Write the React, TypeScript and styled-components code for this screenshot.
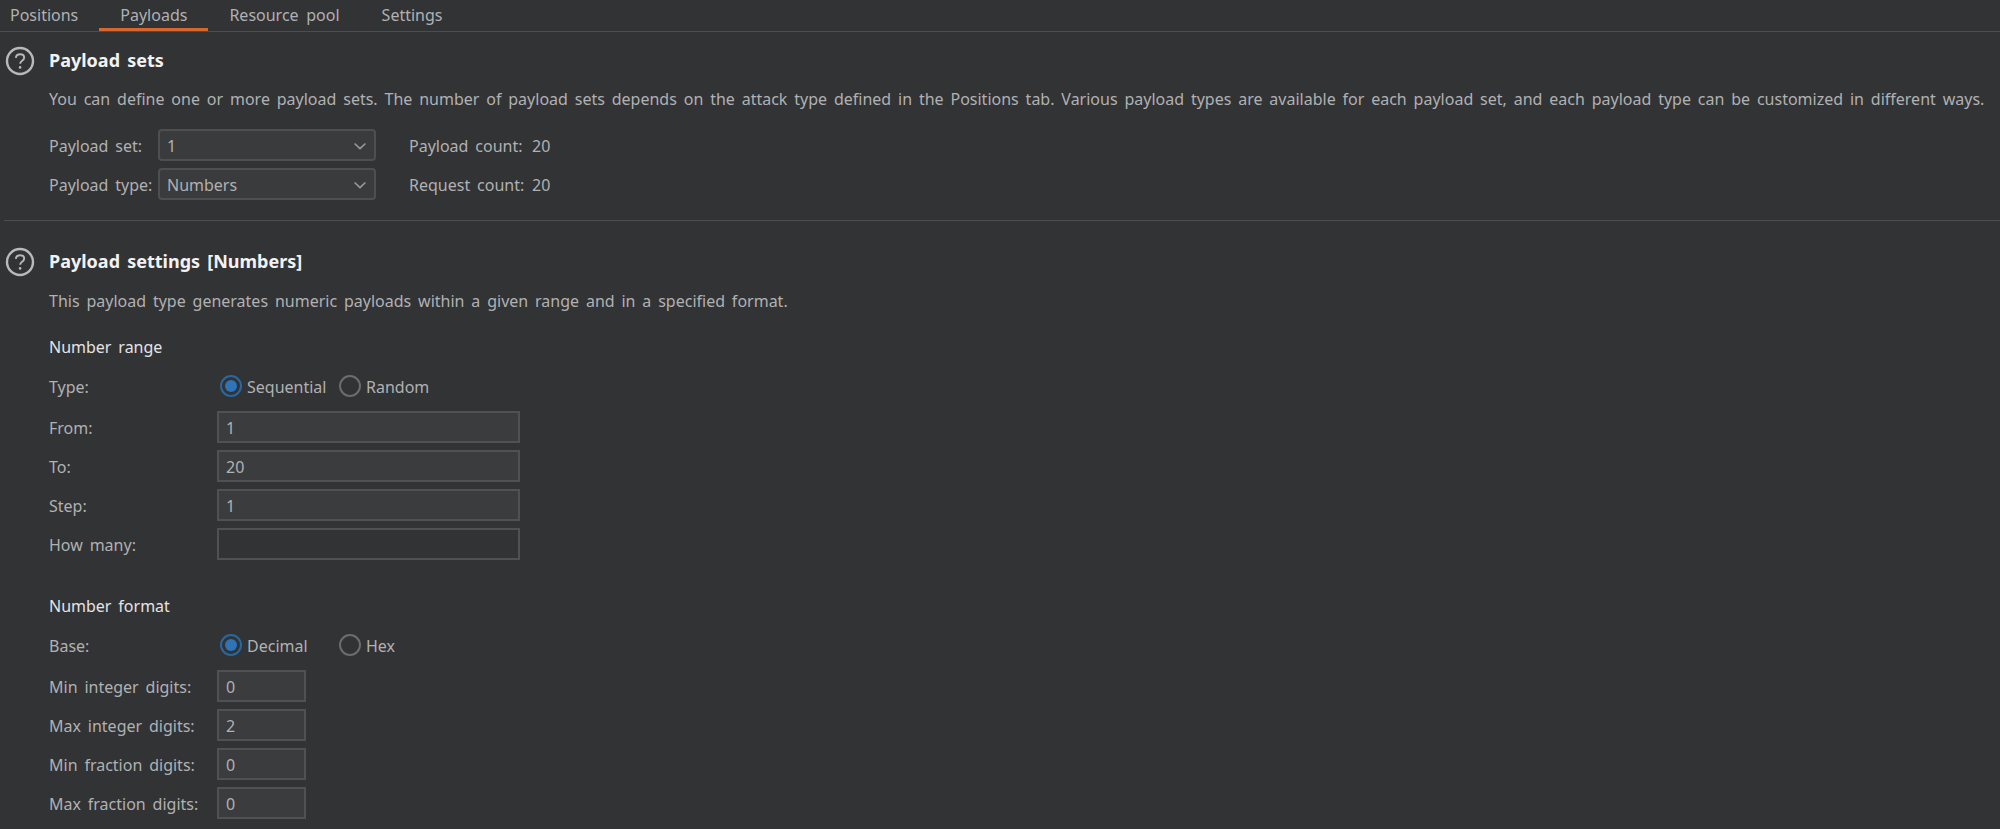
import React from 'react';
import styled, { createGlobalStyle } from 'styled-components';

const GlobalStyle = createGlobalStyle`
  html, body {
    margin: 0;
    padding: 0;
    background: #323335;
  }
`;

const tabs = ['Positions', 'Payloads', 'Resource pool', 'Settings'];

const HelpIcon: React.FC = () => (
  <svg width="30" height="30" viewBox="0 0 30 30" fill="none">
    <circle cx="15" cy="15" r="13" stroke="#b9b9b9" strokeWidth="2.4" />
    <path
      d="M10.8 11.8c.3-2.3 2-3.6 4.3-3.6 2.4 0 4.1 1.4 4.1 3.4 0 1.6-.9 2.4-2.1 3.2-1.2.8-1.9 1.4-1.9 2.9"
      stroke="#b9b9b9"
      strokeWidth="1.9"
    />
    <circle cx="15.1" cy="21.4" r="1.3" fill="#b9b9b9" />
  </svg>
);

const ChevronIcon: React.FC = () => (
  <svg width="12" height="8" viewBox="0 0 12 8" fill="none">
    <path d="M.6 1.5L6 6.7l5.4-5.2" stroke="#999a9b" strokeWidth="1.6" />
  </svg>
);

const FormField: React.FC<{ label: string; value?: string; short?: boolean }> = ({ label, value, short }) => (
  <FieldRow>
    <Label>{label}</Label>
    <TextBox $short={short} $empty={!value}>
      {value}
    </TextBox>
  </FieldRow>
);

const App: React.FC = () => {
  return (
    <Page>
      <GlobalStyle />
      <TabBar>
        {tabs.map(tab => (
          <Tab key={tab} $active={tab === 'Payloads'}>
            {tab}
          </Tab>
        ))}
      </TabBar>

      <Section>
        <SectionHead>
          <HelpIcon />
          <SectionTitle>Payload sets</SectionTitle>
        </SectionHead>
        <Description>
          You can define one or more payload sets. The number of payload sets depends on the attack type defined in the
          Positions tab. Various payload types are available for each payload set, and each payload type can be
          customized in different ways.
        </Description>
        <SetRows>
          <SetRow>
            <Label>Payload set:</Label>
            <Select>
              1
              <ChevronIcon />
            </Select>
            <CountLabel>Payload count:</CountLabel>
            <Label>20</Label>
          </SetRow>
          <SetRow>
            <Label>Payload type:</Label>
            <Select>
              Numbers
              <ChevronIcon />
            </Select>
            <CountLabel>Request count:</CountLabel>
            <Label>20</Label>
          </SetRow>
        </SetRows>
      </Section>

      <Section $divided>
        <SectionHead>
          <HelpIcon />
          <SectionTitle>Payload settings [Numbers]</SectionTitle>
        </SectionHead>
        <Description $tight>This payload type generates numeric payloads within a given range and in a specified format.</Description>

        <GroupTitle>Number range</GroupTitle>
        <RadioRow>
          <Label>Type:</Label>
          <RadioGroup>
            <RadioOption>
              <Radio $checked />
              Sequential
            </RadioOption>
            <RadioOption>
              <Radio />
              Random
            </RadioOption>
          </RadioGroup>
        </RadioRow>
        <Fields>
          <FormField label="From:" value="1" />
          <FormField label="To:" value="20" />
          <FormField label="Step:" value="1" />
          <FormField label="How many:" />
        </Fields>

        <GroupTitle $spaced>Number format</GroupTitle>
        <RadioRow>
          <Label>Base:</Label>
          <RadioGroup>
            <RadioOption>
              <Radio $checked />
              Decimal
            </RadioOption>
            <RadioOption>
              <Radio />
              Hex
            </RadioOption>
          </RadioGroup>
        </RadioRow>
        <Fields>
          <FormField label="Min integer digits:" value="0" short />
          <FormField label="Max integer digits:" value="2" short />
          <FormField label="Min fraction digits:" value="0" short />
          <FormField label="Max fraction digits:" value="0" short />
        </Fields>
      </Section>
    </Page>
  );
};

export default App;

const Page = styled.div`
  width: 2000px;
  height: 829px;
  overflow: hidden;
  background: #323335;
  color: #b0b1b2;
  font-family: 'Noto Sans', sans-serif;
  font-size: 16px;
  line-height: 20px;
  word-spacing: 2.7px;
`;

const TabBar = styled.div`
  display: flex;
  height: 31px;
  border-bottom: 1px solid #4c4d4f;
`;

const Tab = styled.div<{ $active?: boolean }>`
  box-sizing: border-box;
  height: 31px;
  padding: 5px 21px 0;
  border-bottom: 3px solid ${p => (p.$active ? '#d8662f' : 'transparent')};
  word-spacing: 3.5px;

  &:first-child {
    padding-left: 10px;
  }
`;

const Section = styled.section<{ $divided?: boolean }>`
  margin-left: 4px;
  padding-top: ${p => (p.$divided ? '26px' : '14px')};
  border-top: ${p => (p.$divided ? '1px solid #4c4d4f' : 'none')};
  margin-top: ${p => (p.$divided ? '20px' : '0')};
`;

const SectionHead = styled.div`
  display: flex;
  align-items: center;
  gap: 14px;
  height: 30px;
  padding-left: 1px;
`;

const SectionTitle = styled.h2`
  margin: -2px 0 0;
  color: #f2f2f2;
  font-size: 18px;
  font-weight: 700;
  line-height: 20px;
  word-spacing: 2.5px;
`;

const Description = styled.p<{ $tight?: boolean }>`
  margin: ${p => (p.$tight ? '14px' : '13px')} 0 0 45px;
  white-space: nowrap;
`;

const SetRows = styled.div`
  display: flex;
  flex-direction: column;
  gap: 7px;
  margin: 20px 0 0 45px;
`;

const SetRow = styled.div`
  display: grid;
  grid-template-columns: 109px 218px 156px auto;
  align-items: center;
  height: 32px;
`;

const Label = styled.span`
  padding-top: 2px;
  white-space: nowrap;
`;

const CountLabel = styled(Label)`
  padding-left: 33px;
`;

const Select = styled.div`
  box-sizing: border-box;
  display: flex;
  align-items: center;
  justify-content: space-between;
  height: 32px;
  padding: 2px 8px 0 7px;
  background: #3a3b3d;
  border: 2px solid #4e4f51;
  border-radius: 4px;
`;

const GroupTitle = styled.h3<{ $spaced?: boolean }>`
  margin: ${p => (p.$spaced ? '36px' : '26px')} 0 0 45px;
  color: #e4e4e4;
  font-size: 16px;
  font-weight: 400;
  line-height: 20px;
`;

const RadioRow = styled.div`
  display: grid;
  grid-template-columns: 168px auto;
  align-items: center;
  height: 22px;
  margin: 18px 0 0 45px;
`;

const RadioGroup = styled.div`
  display: grid;
  grid-template-columns: 119px auto;
  padding-left: 3px;
`;

const RadioOption = styled.label`
  display: flex;
  align-items: center;
  gap: 5px;
  padding-top: 1px;
`;

const Radio = styled.span<{ $checked?: boolean }>`
  box-sizing: border-box;
  display: flex;
  align-items: center;
  justify-content: center;
  width: 22px;
  height: 22px;
  margin-top: -1px;
  border: 2px solid ${p => (p.$checked ? '#2a679f' : '#6b6c6e')};
  border-radius: 50%;

  &::after {
    content: '';
    display: ${p => (p.$checked ? 'block' : 'none')};
    width: 12px;
    height: 12px;
    background: #2d74b8;
    border-radius: 50%;
  }
`;

const Fields = styled.div`
  display: flex;
  flex-direction: column;
  gap: 7px;
  margin: 14px 0 0 45px;
`;

const FieldRow = styled.div`
  display: grid;
  grid-template-columns: 168px auto;
  align-items: center;
  justify-items: start;
  height: 32px;
`;

const TextBox = styled.div<{ $short?: boolean; $empty?: boolean }>`
  box-sizing: border-box;
  width: ${p => (p.$short ? '89px' : '303px')};
  height: 32px;
  padding: 5px 7px;
  background: ${p => (p.$empty ? '#323335' : '#3b3c3e')};
  border: 2px solid #505153;
`;
